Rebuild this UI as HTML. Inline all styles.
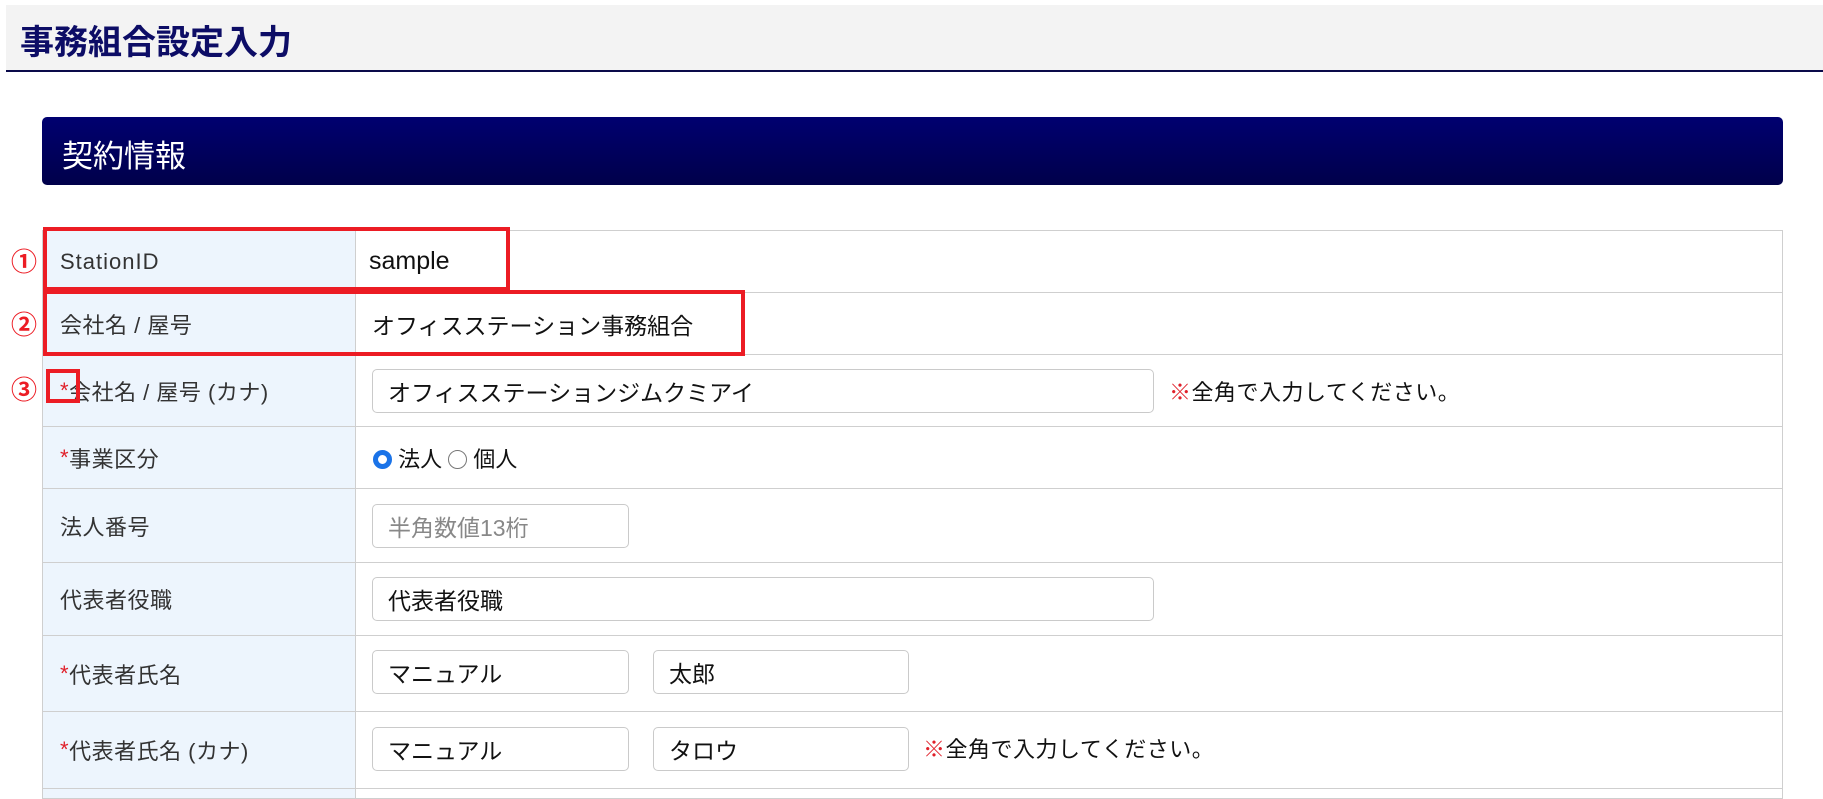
<!DOCTYPE html>
<html><head><meta charset="utf-8">
<style>
*{margin:0;padding:0;box-sizing:border-box}
body{width:1823px;height:793px;overflow:hidden;background:#fff;font-family:"Liberation Sans","Noto Sans CJK JP",sans-serif;color:#222;position:relative}
.hdr{position:absolute;left:6px;top:5px;width:1817px;height:67px;background:#f3f3f3;border-bottom:2px solid #0a0a4a}
.hdr h1{position:absolute;left:14px;top:10px;font-size:34px;font-weight:bold;color:#0d0d66}
.bar{position:absolute;left:42px;top:117px;width:1741px;height:68px;background:linear-gradient(#000070,#00004a);border-radius:5px}
.bar span{position:absolute;left:20px;top:14px;font-size:31px;color:#fff}
.row{position:absolute;left:42px;width:1741px;border:1px solid #cfcfcf;border-top:none}
.row .l{position:absolute;left:0;top:0;bottom:0;width:313px;background:#edf5fd;border-right:1px solid #cfcfcf;font-size:22px;color:#333;display:flex;align-items:center;padding-left:17px;letter-spacing:0.5px}
.req{color:#e0202a}
.v{position:absolute;left:329px;font-size:23px;color:#111}
.inp{position:absolute;height:44px;border:1px solid #cacaca;border-radius:5px;background:#fff;font-size:23px;padding-left:15px;display:flex;align-items:center;color:#111}
.ph{color:#888}
.note{position:absolute;font-size:22px;color:#111;letter-spacing:0.5px}
.note b{color:#e0202a;font-weight:bold}
.rb{position:absolute;border:4px solid #ec1c24}
.num{position:absolute;left:11px;font-size:26px;color:#ec1c24;font-weight:bold}
.radio{display:inline-block;width:19px;height:19px;border-radius:50%;vertical-align:-2px}
</style></head><body>
<div class="hdr"><h1>事務組合設定入力</h1></div>
<div class="bar"><span>契約情報</span></div>

<div class="row" style="top:230px;height:63px;border-top:1px solid #cfcfcf"><div class="l" style="letter-spacing:1px">StationID</div><div class="v" style="top:16px;left:326px;font-size:25px">sample</div></div>
<div class="row" style="top:293px;height:62px"><div class="l">会社名 / 屋号</div><div class="v" style="top:14px">オフィスステーション事務組合</div></div>
<div class="row" style="top:355px;height:72px"><div class="l"><span class="req">*</span>会社名 / 屋号 (カナ)</div>
 <div class="inp" style="left:329px;top:14px;width:782px">オフィスステーションジムクミアイ</div>
 <div class="note" style="left:1126px;top:20px"><b>※</b>全角で入力してください。</div></div>
<div class="row" style="top:427px;height:62px"><div class="l"><span class="req">*</span>事業区分</div>
 <div class="v" style="top:15px;left:330px;font-size:22px"><span class="radio" style="border:5px solid #1a73e8;background:#fff"></span> 法人 <span class="radio" style="border:1px solid #777"></span> 個人</div></div>
<div class="row" style="top:489px;height:74px"><div class="l">法人番号</div>
 <div class="inp ph" style="left:329px;top:15px;width:257px">半角数値13桁</div></div>
<div class="row" style="top:563px;height:73px"><div class="l">代表者役職</div>
 <div class="inp" style="left:329px;top:14px;width:782px">代表者役職</div></div>
<div class="row" style="top:636px;height:76px"><div class="l"><span class="req">*</span>代表者氏名</div>
 <div class="inp" style="left:329px;top:14px;width:257px">マニュアル</div>
 <div class="inp" style="left:610px;top:14px;width:256px">太郎</div></div>
<div class="row" style="top:712px;height:77px"><div class="l"><span class="req">*</span>代表者氏名 (カナ)</div>
 <div class="inp" style="left:329px;top:15px;width:257px">マニュアル</div>
 <div class="inp" style="left:610px;top:15px;width:256px">タロウ</div>
 <div class="note" style="left:880px;top:20px"><b>※</b>全角で入力してください。</div></div>
<div class="row" style="top:789px;height:10px"><div class="l"></div></div>

<div class="rb" style="left:43px;top:227px;width:467px;height:64px"></div>
<div class="rb" style="left:43px;top:290px;width:702px;height:66px"></div>
<div class="rb" style="left:46px;top:369px;width:34px;height:34px"></div>
<div class="num" style="top:242px">①</div>
<div class="num" style="top:305px">②</div>
<div class="num" style="top:370px">③</div>
</body></html>
